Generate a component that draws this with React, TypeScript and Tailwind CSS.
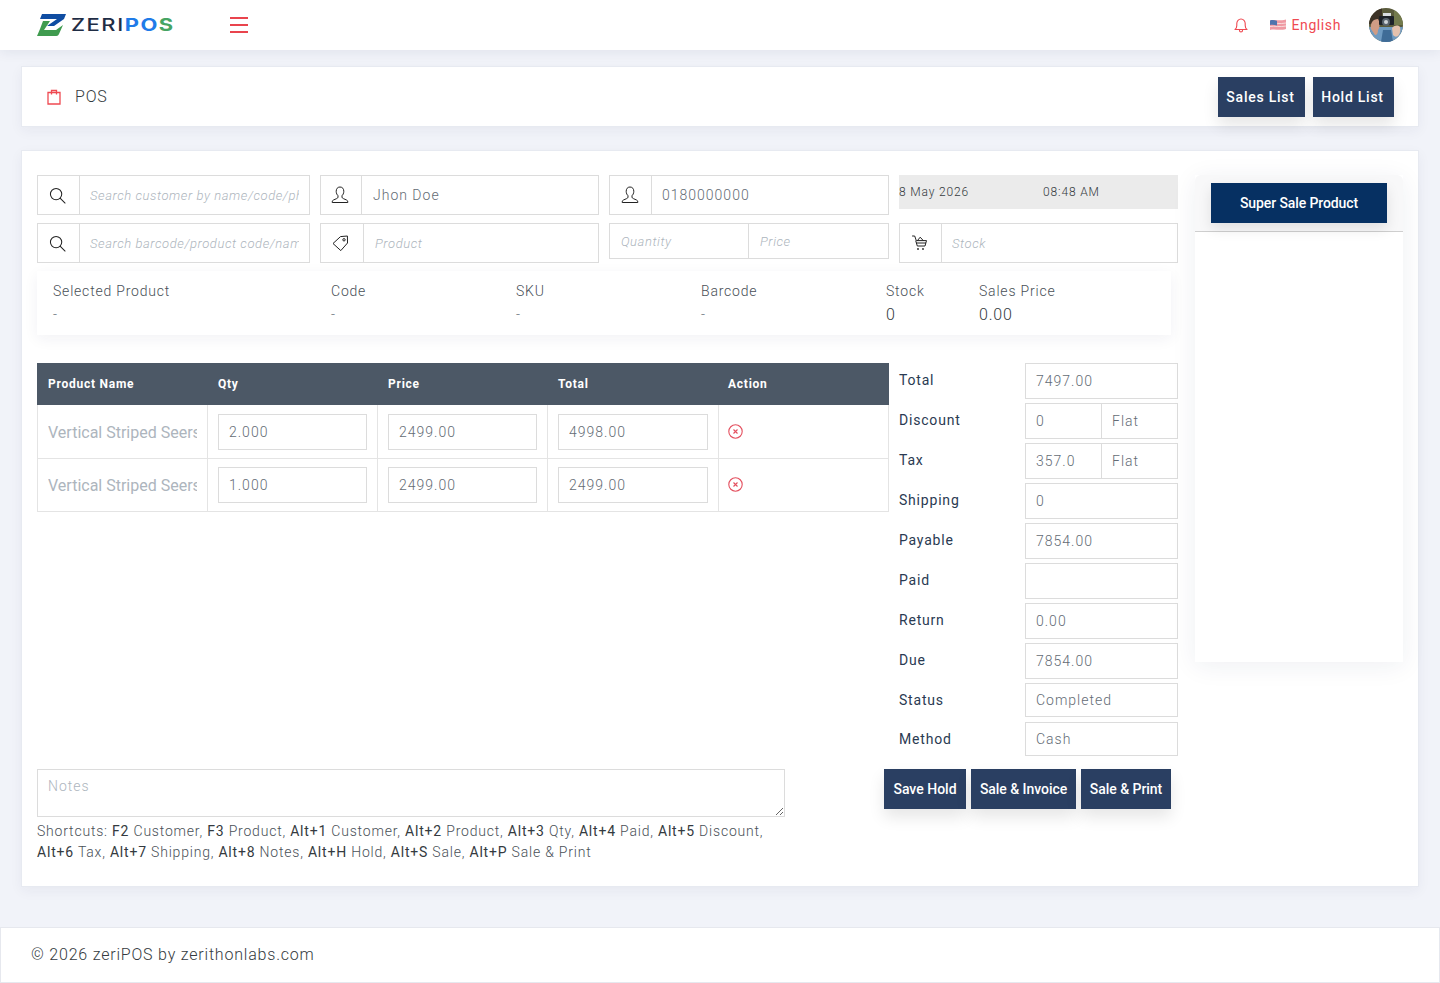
import React from "react";

const IN = "block min-w-0 bg-white border border-[#dcdcdc] px-[10px] text-[14px] font-light tracking-[1px] text-[#646c75] outline-none placeholder:text-[#adb5bd]";
const PH = "placeholder:italic placeholder:text-[13px] placeholder:tracking-[0.57px]";

function Search() {
  return (
    <svg width="17" height="17" viewBox="0 0 18 18" fill="none" stroke="#222" strokeWidth="1.1" strokeLinecap="round">
      <circle cx="7.5" cy="7.5" r="6" />
      <path d="M12 12l5 5" />
    </svg>
  );
}
function User() {
  return (
    <svg width="18" height="18" viewBox="0 0 18 18" fill="none" stroke="#222" strokeWidth="1" strokeLinejoin="round">
      <path d="M9 1C6.4 1 5.2 3 5.2 5.3c0 2 .9 3.6 1.8 4.4v1.5c0 .6-.5 1-1.4 1.4L2.5 14c-.9.4-1.3 1-1.3 1.9v.6h15.6v-.6c0-.9-.4-1.5-1.3-1.9l-3.1-1.4c-.9-.4-1.4-.8-1.4-1.4V9.7c.9-.8 1.8-2.4 1.8-4.4C12.8 3 11.6 1 9 1z" />
    </svg>
  );
}
function Tag() {
  return (
    <svg width="17" height="17" viewBox="0 0 17 17" fill="none" stroke="#222" strokeWidth="1" strokeLinejoin="round">
      <path d="M1 8.5L8.5 1.6l6.9-.6.1 7-6.7 7.6z" />
      <circle cx="12" cy="4.8" r="1.2" />
    </svg>
  );
}
function Cart() {
  return (
    <svg width="16" height="16" viewBox="0 0 16 16" fill="none" stroke="#222" strokeWidth="1" strokeLinejoin="round" strokeLinecap="round">
      <path d="M.5 1h2.2l1.6 4.6h10.2L13 11H5.3L3.8 6" />
      <path d="M5.5 5.5L8.2 2.2l3 3.3M4.6 8h9" />
      <circle cx="6" cy="14" r=".9" fill="#222" stroke="none" />
      <circle cx="11" cy="14" r=".9" fill="#222" stroke="none" />
    </svg>
  );
}
function XCircle() {
  return (
    <svg width="15" height="15" viewBox="0 0 15 15" fill="none" stroke="#e4505f" strokeWidth="1.1">
      <circle cx="7.5" cy="7.5" r="6.7" />
      <path d="M5.5 5.5l4 4M9.5 5.5l-4 4" />
    </svg>
  );
}
function Logo() {
  return (
    <div className="flex items-center gap-[5px]">
      <svg width="29" height="23" viewBox="0 0 29 23">
        <path d="M5 0H29L27 5 17 12H10L20 5H3z" fill="#0f4da2" />
        <path d="M6 7h7L7 16H19L26 11 22 20c-.5 1.3-1.3 2-2.6 2H0L3 15z" fill="#3f9b4f" />
      </svg>
      <span className="font-['Inter',sans-serif] text-[17px] leading-none tracking-[1.2px] font-medium scale-x-[1.29] origin-left whitespace-nowrap text-[#1f2d45]">
        ZERI<span className="text-[#1f7be8] font-bold">PO</span><span className="text-[#46a463] font-bold">S</span>
      </span>
    </div>
  );
}
function Flag() {
  return (
    <svg width="16" height="12" viewBox="0 0 16 12">
      <path d="M0 1.5C4 0 7 2.5 16 .5V10C9 12 5 9.5 0 11z" fill="#ef9aa3" />
      <path d="M0 4.5C5 3.5 9 5.5 16 4M0 7.5C5 6.5 9 8.5 16 7" stroke="#f8dcdc" strokeWidth="1" fill="none" />
      <path d="M0 1.5C2.5.7 5 1.2 7 1.8V6.5C5 6 2.500 5.600 0 6z" fill="#4f74ad" />
    </svg>
  );
}
function Avatar() {
  return (
    <svg width="34" height="34" viewBox="0 0 34 34" className="rounded-full">
      <rect width="34" height="34" fill="#5a5b3c" />
      <rect width="13" height="16" fill="#3c3226" />
      <rect x="25" y="3" width="9" height="14" fill="#737a4c" />
      <rect x="0" y="19" width="34" height="15" fill="#6f9bc2" />
      <path d="M14 22h8l2 12H12z" fill="#3f6c97" />
      <path d="M2 21c-1-6 2-10 7-10 2 3 2 9 0 11 0 3-1 5-3 5z" fill="#cf9c85" />
      <path d="M23 20c3-3 6-3 8-1 1 3 0 7-2 9-2 1-3 1-5-1z" fill="#e4c1ad" />
      <rect x="10" y="8" width="15" height="9" rx="1" fill="#1d2128" />
      <circle cx="17" cy="14" r="4" fill="#59636d" />
      <circle cx="17" cy="14" r="2" fill="#cfd4d8" />
      <rect x="14" y="5" width="8" height="3" fill="#d9dde0" />
    </svg>
  );
}

function Addon({ w, children }: { w: string; children: React.ReactNode }) {
  return <span className={`flex shrink-0 items-center justify-center bg-white border border-[#dcdcdc] pr-[2px] ${w}`}>{children}</span>;
}

function IconField({ icon, w = "w-[43px]", placeholder, value, pad = "" }: { icon: React.ReactNode; w?: string; placeholder?: string; value?: string; pad?: string }) {
  return (
    <div className="flex h-10">
      <Addon w={w}>{icon}</Addon>
      <input readOnly value={value} placeholder={placeholder} className={`${IN} ${PH} ${pad} h-10 -ml-px w-full`} />
    </div>
  );
}

function Info({ label, value, w, big }: { label: string; value: string; w: string; big?: boolean }) {
  return (
    <div className={`${w} shrink-0`}>
      <div className="text-[14px] leading-[21px] font-light tracking-[0.8px] text-[#495057]">{label}</div>
      <div className={`mt-[2px] leading-[21px] font-light tracking-[0.8px] ${big ? "text-[16px] text-[#343a40]" : "text-[14px] text-[#6c757d]"}`}>{value}</div>
    </div>
  );
}

function Row({ qty, total, first }: { qty: string; total: string; first?: boolean }) {
  const cell = `border-r border-b border-[#e4e4e4] px-[10px] ${first ? "pt-[9px]" : "pt-[8px]"}`;
  const inp = `${IN} h-9 w-full`;
  return (
    <div className={`grid grid-cols-[170px_170px_170px_171px_170px] border-l border-[#e4e4e4] ${first ? "h-[54px]" : "h-[53px]"}`}>
      <div className={`${cell} overflow-hidden ${first ? "pt-[18px]" : "pt-[17px]"}`}>
        <div className="w-[149px] overflow-hidden whitespace-nowrap text-[16px] leading-[19px] font-normal text-[#adb5bd]">Vertical Striped Seersucker Shirt</div>
      </div>
      <div className={cell}><input readOnly value={qty} className={inp} /></div>
      <div className={cell}><input readOnly value="2499.00" className={inp} /></div>
      <div className={cell}><input readOnly value={total} className={inp} /></div>
      <div className={`${cell} pl-[9px] ${first ? "pt-[19px]" : "pt-[18px]"}`}><XCircle /></div>
    </div>
  );
}

function SumRow({ label, value, flat, h = "h-9", mb = "mb-1" }: { label: string; value: string; flat?: boolean; h?: string; mb?: string }) {
  return (
    <div className={`flex ${mb}`}>
      <label className="w-[126px] shrink-0 pt-[7px] text-[14px] leading-[21px] tracking-[0.8px] text-[#2a3a52]">{label}</label>
      <div className="flex min-w-0 flex-1">
        <input readOnly value={value} className={`${IN} ${h} w-full`} />
        {flat && <input readOnly value="Flat" className={`${IN} ${h} -ml-px w-[77px] shrink-0`} />}
      </div>
    </div>
  );
}

function Btn({ children, cls }: { children: React.ReactNode; cls: string }) {
  return (
    <button className={`h-10 bg-[#2a3f62] text-white text-[14px] font-medium shadow-[0_8px_16px_rgba(0,0,0,0.1)] ${cls}`}>{children}</button>
  );
}

const B = ({ children }: { children: React.ReactNode }) => <b className="font-normal text-[#343a40]">{children}</b>;

export default function App() {
  return (
    <div className="min-h-[983px] bg-[#f1f3f9] font-['Roboto',sans-serif] text-[#495057]">
      <header className="flex h-[50px] items-center bg-white px-[37px] shadow-[0_2px_12px_rgba(30,40,80,0.08)]">
        <div className="w-[193px]"><Logo /></div>
        <svg width="18" height="16" viewBox="0 0 18 16" stroke="#e9444d" strokeWidth="2">
          <path d="M0 1h18M0 8h18M0 15h18" />
        </svg>
        <div className="ml-auto flex items-center">
          <svg width="14" height="15" viewBox="0 0 14 15" fill="none" stroke="#ef4a52" strokeWidth="1.1" strokeLinejoin="round">
            <path d="M1 11.5h12c-1.2-1-1.8-2-1.8-4V5.6C11.2 3 9.4 1 7 1S2.8 3 2.8 5.6v1.9c0 2-.6 3-1.8 4z" />
            <path d="M5.4 12c0 1.2.7 2 1.6 2s1.6-.8 1.6-2" />
          </svg>
          <span className="ml-[22px] flex"><Flag /></span>
          <span className="ml-[6px] text-[14px] font-normal tracking-[0.6px] text-[#ef4a52]">English</span>
          <span className="ml-[28px] flex"><Avatar /></span>
        </div>
      </header>

      <div className="px-[21px]">
        <section className="mt-[16px] flex h-[61px] items-center border border-[#e7eaf1] bg-white pl-[25px] pr-[24px] shadow-[0_4px_12px_rgba(30,40,80,0.05)]">
          <svg width="14" height="16" viewBox="0 0 14 16" fill="none" stroke="#ef4a52" strokeWidth="1.3">
            <path d="M1 3.5h12V15H1z" />
            <path d="M4.5 5.5V1.5h5v4" />
          </svg>
          <h1 className="ml-[14px] pt-px text-[16px] font-light tracking-[0.8px] text-[#343a40]">POS</h1>
          <div className="ml-auto flex gap-2">
            <Btn cls="w-[87px] pt-px pr-[2px] tracking-[0.75px]">Sales List</Btn>
            <Btn cls="w-[81px] pt-px pr-[2px] tracking-[0.75px]">Hold List</Btn>
          </div>
        </section>

        <section className="mt-[23px] flex h-[737px] border border-[#e7eaf1] bg-white px-[15px] pt-[24px] shadow-[0_4px_12px_rgba(30,40,80,0.05)]">
          <div className="w-[1141px] shrink-0">
            <div className="grid grid-cols-[273px_279px_280px_279px] gap-x-[10px] gap-y-2">
              <IconField icon={<Search />} placeholder="Search customer by name/code/phone" />
              <IconField icon={<User />} w="w-[42px]" value="Jhon Doe" pad="pl-[11px]" />
              <IconField icon={<User />} w="w-[43px]" value="0180000000" />
              <div className="flex h-[34px] items-center bg-[#ebebeb] text-[12px] font-light tracking-[0.85px] text-[#343a40]">
                <span className="w-[144px]">8 May 2026</span>
                <span>08:48 AM</span>
              </div>
              <IconField icon={<Search />} placeholder="Search barcode/product code/name" />
              <IconField icon={<Tag />} w="w-[44px] pr-[4px]" placeholder="Product" pad="pl-[11px]" />
              <div className="flex h-9">
                <input readOnly placeholder="Quantity" className={`${IN} ${PH} h-9 w-[140px] shrink-0 pl-[11px]`} />
                <input readOnly placeholder="Price" className={`${IN} ${PH} h-9 -ml-px w-full pl-[11px]`} />
              </div>
              <IconField icon={<Cart />} placeholder="Stock" />
            </div>

            <div className="mt-2 flex h-16 w-[1134px] bg-white pl-4 pt-[10px] shadow-[0_4px_14px_rgba(30,40,80,0.06)]">
              <Info w="w-[278px]" label="Selected Product" value="-" />
              <Info w="w-[185px]" label="Code" value="-" />
              <Info w="w-[185px]" label="SKU" value="-" />
              <Info w="w-[185px]" label="Barcode" value="-" />
              <Info w="w-[93px]" label="Stock" value="0" big />
              <Info w="w-[150px]" label="Sales Price" value="0.00" big />
            </div>

            <div className="mt-7 flex">
              <div className="h-[406px] w-[852px] shrink-0">
                <div className="grid h-[42px] grid-cols-[170px_170px_170px_170px_171px] items-center bg-[#4c5866] pl-[11px] text-[12px] font-bold tracking-[0.75px] text-white">
                  <span>Product Name</span>
                  <span>Qty</span>
                  <span>Price</span>
                  <span>Total</span>
                  <span>Action</span>
                </div>
                <Row first qty="2.000" total="4998.00" />
                <Row qty="1.000" total="2499.00" />
              </div>
              <div className="ml-[10px] min-w-0 flex-1">
                <SumRow label="Total" value="7497.00" />
                <SumRow label="Discount" value="0" flat />
                <SumRow label="Tax" value="357.0" flat />
                <SumRow label="Shipping" value="0" />
                <SumRow label="Payable" value="7854.00" />
                <SumRow label="Paid" value="" />
                <SumRow label="Return" value="0.00" />
                <SumRow label="Due" value="7854.00" />
                <SumRow label="Status" value="Completed" h="h-[34px]" mb="mb-[5px]" />
                <SumRow label="Method" value="Cash" h="h-[34px]" mb="mb-0" />
              </div>
            </div>

            <div className="flex">
              <div className="w-[748px] shrink-0">
                <textarea readOnly placeholder="Notes" className={`${IN} h-12 w-full resize-y py-[6px] align-top leading-[21px] placeholder:text-[#9aa1a8]`} />
                <p className="mt-[4px] text-[14px] leading-[21px] font-light tracking-[0.8px] text-[#495057]">
                  Shortcuts: <B>F2</B> Customer, <B>F3</B> Product, <B>Alt+1</B> Customer, <B>Alt+2</B> Product, <B>Alt+3</B> Qty, <B>Alt+4</B> Paid, <B>Alt+5</B> Discount, <B>Alt+6</B> Tax, <B>Alt+7</B> Shipping, <B>Alt+8</B> Notes, <B>Alt+H</B> Hold, <B>Alt+S</B> Sale, <B>Alt+P</B> Sale &amp; Print
                </p>
              </div>
              <div className="ml-[99px] flex gap-[5px]">
                <Btn cls="w-[82px]">Save Hold</Btn>
                <Btn cls="w-[105px] tracking-[-0.05px]">Sale &amp; Invoice</Btn>
                <Btn cls="w-[90px] tracking-[-0.05px]">Sale &amp; Print</Btn>
              </div>
            </div>
          </div>

          <aside className="ml-[17px] h-[487px] w-[208px] shrink-0 bg-white shadow-[0_4px_24px_rgba(30,40,80,0.07)]">
            <div className="flex h-[57px] justify-center rounded-t-md border-b border-[#cfcfcf] bg-[#f8f8f9] pt-2">
              <button className="h-10 w-[176px] bg-[#063062] text-[14px] font-medium tracking-[-0.1px] text-white shadow-[0_6px_14px_rgba(0,0,0,0.1)]">Super Sale Product</button>
            </div>
          </aside>
        </section>
      </div>

      <footer className="mt-[40px] flex h-[56px] items-center border border-[#e6e8ee] bg-white pl-[30px] text-[16px] font-light tracking-[0.8px] text-[#343a40]">
        © 2026 zeriPOS by zerithonlabs.com
      </footer>
    </div>
  );
}
